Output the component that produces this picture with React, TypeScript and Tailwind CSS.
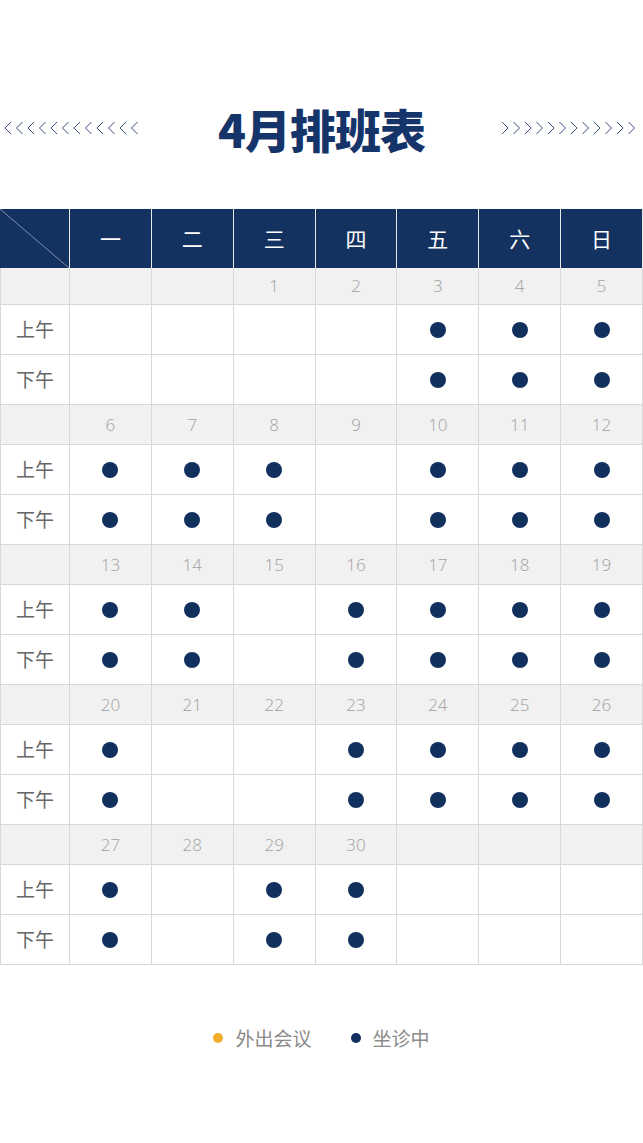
import React from 'react'

const days = ['一', '二', '三', '四', '五', '六', '日']

type Week = { dates: (number | null)[]; on: number[] }

// on = column indexes (0 = 一) where the doctor is in clinic, same for 上午 and 下午
const weeks: Week[] = [
  { dates: [null, null, 1, 2, 3, 4, 5], on: [4, 5, 6] },
  { dates: [6, 7, 8, 9, 10, 11, 12], on: [0, 1, 2, 4, 5, 6] },
  { dates: [13, 14, 15, 16, 17, 18, 19], on: [0, 1, 3, 4, 5, 6] },
  { dates: [20, 21, 22, 23, 24, 25, 26], on: [0, 3, 4, 5, 6] },
  { dates: [27, 28, 29, 30, null, null, null], on: [0, 2, 3] },
]

const Chevrons: React.FC<{ dir: 'left' | 'right' }> = ({ dir }) => (
  <svg width="138" height="14" viewBox="0 0 138 14" fill="none">
    {Array.from({ length: 12 }).map((_, i) => {
      const x = 1 + i * 11.5
      const pts = dir === 'left' ? `${x + 6},1 ${x},7 ${x + 6},13` : `${x},1 ${x + 6},7 ${x},13`
      return <polyline key={i} points={pts} stroke="#1b3a6b" strokeWidth="0.9" />
    })}
  </svg>
)

const Dot: React.FC = () => <span className="block w-4 h-4 rounded-full bg-[#11305e]" />

const App: React.FC = () => {
  return (
    <div className="w-[643px] h-[1143px] bg-white font-['Noto_Sans_CJK_SC',sans-serif]">
      <div className="h-[209px] flex items-center justify-between px-[4px] pt-[46px]">
        <Chevrons dir="left" />
        <h1 className="text-[46px] font-black text-[#14346a] tracking-[-1px] leading-none">4月排班表</h1>
        <Chevrons dir="right" />
      </div>

      <div className="grid grid-cols-[70px_repeat(7,minmax(0,1fr))]">
        <div className="relative h-[59px] bg-[#14325f] border-r border-[#e8e8e8]">
          <svg className="absolute inset-0" width="100%" height="100%" preserveAspectRatio="none" viewBox="0 0 70 59">
            <line x1="0" y1="0" x2="70" y2="59" stroke="#9aa7bd" strokeWidth="0.8" />
          </svg>
        </div>
        {days.map((d) => (
          <div
            key={d}
            className="h-[59px] bg-[#14325f] border-r border-[#e8e8e8] last:border-r-0 flex items-center justify-center text-white text-[21px]"
          >
            {d}
          </div>
        ))}

        {weeks.map((w, wi) => (
          <React.Fragment key={wi}>
            <div className={`${wi === 0 ? 'h-[37px]' : 'h-[40px]'} bg-[#f1f1f1] border-l border-r border-b border-[#d8d8d8]`} />
            {w.dates.map((dt, i) => (
              <div
                key={i}
                className={`${wi === 0 ? 'h-[37px]' : 'h-[40px]'} bg-[#f1f1f1] border-r border-b border-[#d8d8d8] flex items-center justify-center font-['Open_Sans',sans-serif] font-light text-[17px] text-[#a0a0a0]`}
              >
                {dt ?? ''}
              </div>
            ))}
            {['上午', '下午'].map((label) => (
              <React.Fragment key={label}>
                <div className="h-[50px] border-l border-r border-b border-[#d8d8d8] flex items-center justify-center text-[19px] text-[#666]">
                  {label}
                </div>
                {w.dates.map((_, i) => (
                  <div key={i} className="h-[50px] border-r border-b border-[#d8d8d8] flex items-center justify-center">
                    {w.on.includes(i) && <Dot />}
                  </div>
                ))}
              </React.Fragment>
            ))}
          </React.Fragment>
        ))}
      </div>

      <div className="mt-[59px] flex items-center justify-center gap-[39px] text-[19px] text-[#8a8a8a]">
        <div className="flex items-center gap-[12px]">
          <span className="block w-[10px] h-[10px] rounded-full bg-[#f0ac2a]" />
          <span>外出会议</span>
        </div>
        <div className="flex items-center gap-[12px]">
          <span className="block w-[10px] h-[10px] rounded-full bg-[#11305e]" />
          <span>坐诊中</span>
        </div>
      </div>
    </div>
  )
}

export default App
